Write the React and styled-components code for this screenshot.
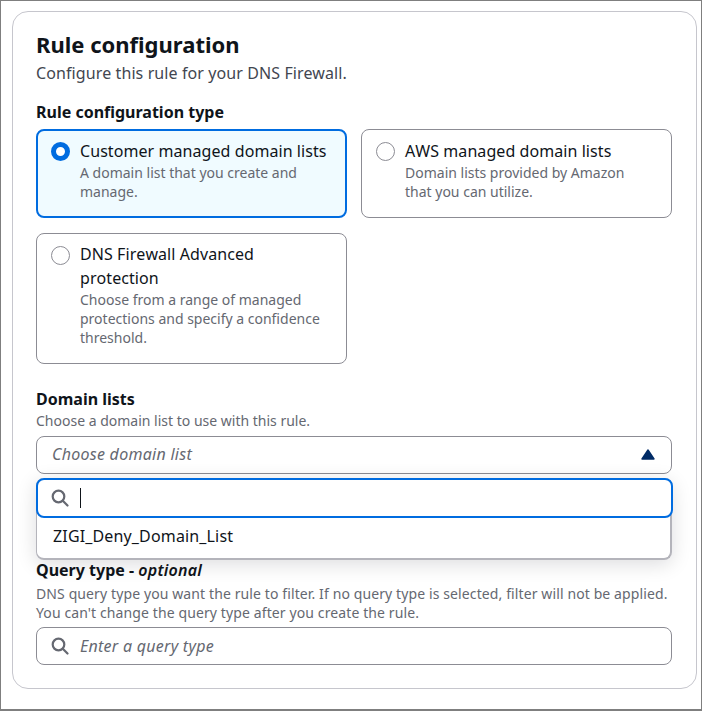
import React from "react";
import styled, { createGlobalStyle } from "styled-components";

const Global = createGlobalStyle`
  html, body { margin: 0; padding: 0; background: #fff; }
  body { font-family: "Noto Sans", "Open Sans", sans-serif; }
`;

const Frame = styled.div`
  box-sizing: border-box;
  width: 702px;
  height: 711px;
  border: 1px solid #7f7f7f;
  border-bottom-width: 2px;
  padding: 10px 4px 0 11px;
  background: #fff;
`;

const Card = styled.section`
  box-sizing: border-box;
  height: 678px;
  border: 1px solid #c6c6cd;
  border-radius: 16px;
  padding: 19px 24px 0 23px;
`;

const Title = styled.h2`
  margin: 0;
  font-size: 22px;
  line-height: 26px;
  font-weight: 700;
  color: #0f141a;
`;

const Description = styled.p`
  margin: 5px 0 0;
  font-size: 16px;
  line-height: 22px;
  color: #424650;
  letter-spacing: 0.1px;
`;

const FieldLabel = styled.div`
  font-size: 16px;
  line-height: 22px;
  font-weight: 700;
  color: #0f141a;
  margin-top: ${(p) => p.$top || 0}px;
  em { font-style: italic; font-weight: 600; letter-spacing: 0.25px; }
`;

const Hint = styled.div`
  font-size: 14px;
  line-height: 19px;
  color: #656871;
  margin-top: 1px;
`;

const Tiles = styled.div`
  display: grid;
  grid-template-columns: 311px 311px;
  column-gap: 14px;
  row-gap: 15px;
  margin-top: 6px;
  align-items: start;
`;

const Tile = styled.label`
  box-sizing: border-box;
  display: flex;
  gap: 10px;
  height: ${(p) => p.$height}px;
  padding: ${(p) => (p.$selected ? "10px 13px" : "11px 14px")};
  border: ${(p) => (p.$selected ? "2px solid #006ce0" : "1px solid #8c8c94")};
  border-radius: 8px;
  background: ${(p) => (p.$selected ? "#f0fbff" : "#fff")};
`;

const Radio = styled.span`
  box-sizing: border-box;
  flex: none;
  width: 19px;
  height: 19px;
  margin-top: 1px;
  border-radius: 50%;
  background: #fff;
  border: ${(p) => (p.$on ? "5px solid #006ce0" : "1px solid #8c8c94")};
`;

const TileText = styled.div`
  display: flex;
  flex-direction: column;
  margin-top: ${(p) => p.$shift || 0}px;
`;

const TileTitle = styled.span`
  font-size: 16px;
  line-height: 24px;
  color: #0f141a;
  margin-top: -2px;
  font-kerning: none;
  letter-spacing: 0.07px;
`;

const TileDesc = styled.span`
  font-size: 14px;
  line-height: 19px;
  color: #656871;
  max-width: 245px;
`;

const DomainField = styled.div`
  position: relative;
  margin-top: 24px;
`;

const Select = styled.div`
  box-sizing: border-box;
  display: flex;
  align-items: center;
  justify-content: space-between;
  height: 38px;
  margin-top: 6px;
  padding: 0 16px 2px 15px;
  border: 1px solid #8c8c94;
  border-radius: 8px;
`;

const Placeholder = styled.span`
  font-size: 16px;
  font-style: italic;
  color: #656871;
  letter-spacing: 0.27px;
`;

const Popup = styled.div`
  position: absolute;
  left: 0;
  right: 0;
  top: 90px;
  height: 82px;
  box-sizing: border-box;
  background: #fff;
  border: 1px solid #b4b4bb;
  border-width: 0 2px 2px 1px;
  border-radius: 8px;
  box-shadow: 0 4px 20px rgba(0, 7, 22, 0.14);
`;

const SearchBox = styled.div`
  box-sizing: border-box;
  display: flex;
  align-items: center;
  gap: 10px;
  height: 40px;
  margin: 0 -3px 0 -1px;
  padding: 0 13px;
  border: 2px solid #006ce0;
  border-radius: 8px;
  background: #fff;
`;

const Caret = styled.span`
  width: 1px;
  height: 20px;
  background: #0f141a;
  margin-left: 1px;
`;

const Option = styled.div`
  padding: 6px 15px 6px 16px;
  font-size: 16px;
  line-height: 24px;
  color: #0f141a;
  letter-spacing: 0.15px;
`;

const QueryHint = styled(Hint)`
  white-space: nowrap;
  letter-spacing: 0.11px;
  margin-top: 3px;
`;

const QueryInput = styled.div`
  box-sizing: border-box;
  display: flex;
  align-items: center;
  gap: 11px;
  height: 38px;
  margin-top: 5px;
  padding: 0 14px;
  border: 1px solid #8c8c94;
  border-radius: 8px;
`;

const SearchIcon = () => (
  <svg width="18" height="18" viewBox="0 0 18 18" fill="none" stroke="#656871" strokeWidth="2.2" style={{ flex: "none" }}>
    <circle cx="7.5" cy="7.5" r="5.8" />
    <path d="M11.8 11.8 L16.5 16.5" strokeLinecap="round" />
  </svg>
);

const CaretUp = () => (
  <svg width="14" height="11" viewBox="0 0 14 11">
    <path d="M7 1 L13 10 H1 Z" fill="#002b66" stroke="#002b66" strokeWidth="1.4" strokeLinejoin="round" />
  </svg>
);

const TileOption = ({ title, desc, selected, height, shift }) => (
  <Tile $selected={selected} $height={height}>
    <Radio $on={selected} />
    <TileText $shift={shift}>
      <TileTitle>{title}</TileTitle>
      <TileDesc>{desc}</TileDesc>
    </TileText>
  </Tile>
);

export default function App() {
  return (
    <Frame>
      <Global />
      <Card>
        <Title>Rule configuration</Title>
        <Description>Configure this rule for your DNS Firewall.</Description>
        <FieldLabel $top={17}>Rule configuration type</FieldLabel>
        <Tiles>
          <TileOption selected height={89} title="Customer managed domain lists" desc="A domain list that you create and manage." />
          <TileOption height={89} title="AWS managed domain lists" desc="Domain lists provided by Amazon that you can utilize." />
          <TileOption height={131} shift={-1} title="DNS Firewall Advanced protection" desc="Choose from a range of managed protections and specify a confidence threshold." />
        </Tiles>
        <DomainField>
          <FieldLabel>Domain lists</FieldLabel>
          <Hint>Choose a domain list to use with this rule.</Hint>
          <Select>
            <Placeholder>Choose domain list</Placeholder>
            <CaretUp />
          </Select>
          <Popup>
            <SearchBox>
              <SearchIcon />
              <Caret />
            </SearchBox>
            <Option>ZIGI_Deny_Domain_List</Option>
          </Popup>
        </DomainField>
        <FieldLabel $top={85}>Query type - <em>optional</em></FieldLabel>
        <QueryHint>
          DNS query type you want the rule to filter. If no query type is selected, filter will not be applied.
          <br />
          You can't change the query type after you create the rule.
        </QueryHint>
        <QueryInput>
          <SearchIcon />
          <Placeholder>Enter a query type</Placeholder>
        </QueryInput>
      </Card>
    </Frame>
  );
}
